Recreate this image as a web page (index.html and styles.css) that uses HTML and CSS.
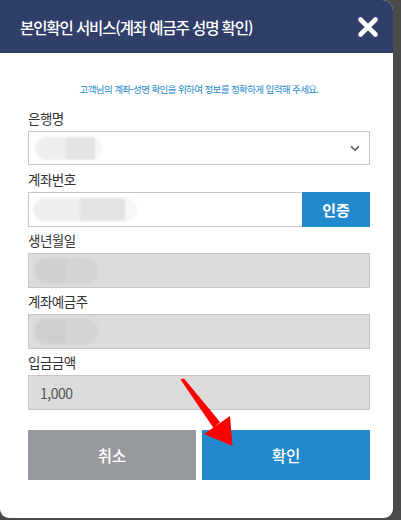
FILE: index.html
```html
<!DOCTYPE html>
<html lang="ko">
<head>
    <meta charset="UTF-8">
    <meta name="viewport" content="width=device-width, initial-scale=1.0">
    <link rel="stylesheet" href="styles.css">
    <title>본인확인 서비스</title>
</head>
<body>
    <div class="modal">
        <div class="modal-header">
            <h1 class="modal-title">본인확인 서비스(계좌 예금주 성명 확인)</h1>
            <button class="close-btn" aria-label="닫기">
                <svg width="22" height="22" viewBox="0 0 22 22">
                    <path d="M3.5 3.5 L18.5 18.5 M18.5 3.5 L3.5 18.5" stroke="#fff" stroke-width="4.6" stroke-linecap="round" fill="none"/>
                </svg>
            </button>
        </div>

        <div class="modal-body">
            <p class="notice">고객님의 계좌-성명 확인을 위하여 정보를 정확하게 입력해 주세요.</p>

            <div class="field">
                <label class="label">은행명</label>
                <div class="box select-box">
                    <span class="blur blur-light blur-sm"></span>
                    <svg class="chevron" width="10" height="7" viewBox="0 0 10 7">
                        <path d="M1 1.2 L5 5.2 L9 1.2" stroke="#555" stroke-width="1.6" fill="none"/>
                    </svg>
                </div>
            </div>

            <div class="field">
                <label class="label">계좌번호</label>
                <div class="input-row">
                    <div class="box input-box">
                        <span class="blur blur-light blur-lg"></span>
                    </div>
                    <button class="auth-btn">인증</button>
                </div>
            </div>

            <div class="field">
                <label class="label">생년월일</label>
                <div class="box box-disabled">
                    <span class="blur blur-dark blur-md"></span>
                </div>
            </div>

            <div class="field">
                <label class="label">계좌예금주</label>
                <div class="box box-disabled">
                    <span class="blur blur-dark blur-md"></span>
                </div>
            </div>

            <div class="field">
                <label class="label">입금금액</label>
                <div class="box box-disabled amount">1,000</div>
            </div>

            <div class="actions">
                <button class="action-btn cancel">취소</button>
                <button class="action-btn confirm">확인</button>
            </div>
        </div>

        <svg class="arrow" width="401" height="520" viewBox="0 0 401 520">
            <polygon points="180.5,379.5 184,378.5 220,422 213.5,428" fill="#ff0000"/>
            <polygon points="204,434 230,416 232.5,446" fill="#ff0000"/>
        </svg>
    </div>
</body>
</html>
```

FILE: styles.css
```css
body {
    margin: 0;
    background-color: #4b4b4b;
    font-family: "Noto Sans CJK KR", "Noto Sans", sans-serif;
}

.modal {
    position: relative;
    width: 393px;
    height: 518px;
    background-color: #fff;
    border-radius: 0 11px 9px 9px;
    overflow: hidden;
}

.modal-header {
    display: flex;
    align-items: center;
    justify-content: space-between;
    height: 53px;
    padding: 0 14px 0 20px;
    background-color: #2f3f69;
}

.modal-title {
    margin: 0;
    color: #fff;
    font-size: 15.5px;
    font-weight: 500;
    letter-spacing: -1.1px;
}

.close-btn {
    display: flex;
    padding: 0;
    border: none;
    background: none;
    cursor: pointer;
}

.modal-body {
    padding: 29px 23px 0 28px;
}

.notice {
    margin: 0 0 9px;
    color: #2389cd;
    font-size: 9.5px;
    line-height: 14px;
    text-align: center;
    letter-spacing: -0.6px;
}

.field {
    display: flex;
    flex-direction: column;
}

.label {
    height: 26px;
    line-height: 26px;
    color: #333;
    font-size: 13.5px;
    letter-spacing: -0.5px;
}

.box {
    display: flex;
    align-items: center;
    box-sizing: border-box;
    height: 35px;
    padding: 0 6px;
    border: 1px solid #c8c8c8;
    background-color: #fff;
}

.select-box {
    height: 34px;
    justify-content: space-between;
    margin-bottom: 1px;
}

.chevron {
    margin-right: 3px;
}

.input-row {
    display: flex;
}

.input-box {
    flex: 1;
    padding-left: 4px;
    border-right: none;
}

.auth-btn {
    width: 68px;
    height: 35px;
    border: none;
    background-color: #2389cd;
    color: #fff;
    font-family: inherit;
    font-size: 15px;
    font-weight: 700;
    cursor: pointer;
}

.box-disabled {
    border-color: #c6c6c6;
    background-color: #dcdcdc;
    padding-left: 5px;
}

.amount {
    padding-left: 11px;
    color: #555;
    font-size: 14px;
    letter-spacing: -0.5px;
}

.blur {
    display: inline-block;
    height: 23px;
    border-radius: 12px;
    filter: blur(1.2px);
}

.blur-light {
    background: linear-gradient(to right, #efefef 45%, #e3e3e3 45%, #e3e3e3 88%, #f6f6f6 88%);
}

.blur-dark {
    height: 25px;
    background: linear-gradient(to right, #cfcfcf 50%, #d3d3d3 50%);
}

.blur-sm {
    width: 68px;
}

.blur-md {
    width: 64px;
}

.blur-lg {
    width: 104px;
}

.actions {
    display: flex;
    gap: 6px;
    margin-top: 20px;
}

.action-btn {
    flex: 1;
    height: 50px;
    border: none;
    color: #fff;
    font-family: inherit;
    font-size: 15.5px;
    font-weight: 500;
    cursor: pointer;
}

.cancel {
    background-color: #969a9e;
}

.confirm {
    background-color: #2389cd;
}

.arrow {
    position: absolute;
    top: 0;
    left: 0;
    pointer-events: none;
}
```
